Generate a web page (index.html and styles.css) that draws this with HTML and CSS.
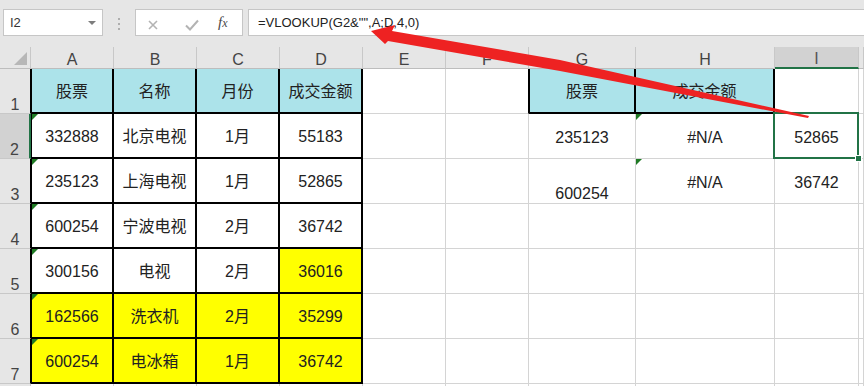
FILE: index.html
```html
<!DOCTYPE html>
<html lang="zh">
<head>
<meta charset="utf-8">
<title>VLOOKUP</title>
<link rel="stylesheet" href="styles.css">
</head>
<body>
<div class="app">
  <div class="toolbar">
    <div class="namebox"><span>I2</span><span class="caret"></span></div>
    <div class="grip"><span></span></div>
    <div class="fxbox">
      <svg class="fxicons" width="106" height="25" viewBox="0 0 106 25">
        <path d="M13 11 L21 19 M21 11 L13 19" stroke="#b3b3b3" stroke-width="1.6" fill="none"/>
        <path d="M50 15.5 L54 19.5 L62 10.5" stroke="#b3b3b3" stroke-width="2" fill="none"/>
      </svg>
      <span class="fx">f<span class="fxx">x</span></span>
    </div>
    <div class="formula">=VLOOKUP(G2&amp;"",A;D,4,0)</div>
  </div>

  <div class="sheet">
    <div class="corner"><span class="corner-tri"></span></div>
    <div class="ch">A</div><div class="ch">B</div><div class="ch">C</div><div class="ch">D</div><div class="ch">E</div><div class="ch">F</div><div class="ch">G</div><div class="ch">H</div><div class="ch chsel">I</div><div class="ch"></div>

    <div class="rh blk">1</div>
    <div class="c b bl cy">股票</div><div class="c b cy">名称</div><div class="c b cy">月份</div><div class="c b cy">成交金额</div>
    <div class="c"></div><div class="c f1"></div>
    <div class="c b bl cy">股票</div><div class="c b cy">成交金额</div>
    <div class="c"></div><div class="c"></div>

    <div class="rh rhsel">2</div>
    <div class="c b bl tri">332888</div><div class="c b">北京电视</div><div class="c b">1月</div><div class="c b">55183</div>
    <div class="c"></div><div class="c"></div>
    <div class="c">235123</div><div class="c tri">#N/A</div><div class="c sel">52865</div><div class="c"></div>

    <div class="rh blk">3</div>
    <div class="c b bl tri">235123</div><div class="c b">上海电视</div><div class="c b">1月</div><div class="c b">52865</div>
    <div class="c"></div><div class="c"></div>
    <div class="c low">600254</div><div class="c tri">#N/A</div><div class="c">36742</div><div class="c"></div>

    <div class="rh blk">4</div>
    <div class="c b bl tri">600254</div><div class="c b">宁波电视</div><div class="c b">2月</div><div class="c b">36742</div>
    <div class="c"></div><div class="c"></div><div class="c"></div><div class="c"></div><div class="c"></div><div class="c"></div>

    <div class="rh blk">5</div>
    <div class="c b bl tri">300156</div><div class="c b">电视</div><div class="c b">2月</div><div class="c b ye">36016</div>
    <div class="c"></div><div class="c"></div><div class="c"></div><div class="c"></div><div class="c"></div><div class="c"></div>

    <div class="rh blk">6</div>
    <div class="c b bl tri ye">162566</div><div class="c b ye">洗衣机</div><div class="c b ye">2月</div><div class="c b ye">35299</div>
    <div class="c"></div><div class="c"></div><div class="c"></div><div class="c"></div><div class="c"></div><div class="c"></div>

    <div class="rh blk">7</div>
    <div class="c b bl tri ye">600254</div><div class="c b ye">电冰箱</div><div class="c b ye">1月</div><div class="c b ye">36742</div>
    <div class="c"></div><div class="c"></div><div class="c"></div><div class="c"></div><div class="c"></div><div class="c"></div>

    <div class="rh"></div>
    <div class="c"></div><div class="c"></div><div class="c"></div><div class="c"></div><div class="c"></div><div class="c"></div><div class="c"></div><div class="c"></div><div class="c"></div><div class="c"></div>
  </div>

  <svg class="arrow" width="864" height="386" viewBox="0 0 864 386">
    <polygon points="371,31 395,25 392,31 560,60 809,116 808,118 560,71 388,41 385,44" fill="#ee2222"/>
  </svg>
</div>
</body>
</html>
```

FILE: styles.css
```css
html, body {
  margin: 0;
  padding: 0;
  background: #fff;
}

.app {
  width: 864px;
  height: 386px;
  overflow: hidden;
  position: relative;
  background: #fff;
  font-family: "Liberation Sans", "Noto Sans CJK SC", sans-serif;
}

/* ---------- formula bar ---------- */
.toolbar {
  height: 47px;
  box-sizing: border-box;
  background: #e6e6e6;
  display: flex;
  align-items: flex-start;
  padding: 9px 0 0 3px;
}

.namebox {
  width: 100px;
  height: 27px;
  box-sizing: border-box;
  background: #fff;
  border: 1px solid #c6c6c6;
  display: flex;
  align-items: center;
  justify-content: space-between;
  padding: 0 6px 0 6px;
  font-size: 13px;
  color: #333;
}

.caret {
  width: 0;
  height: 0;
  border-left: 4px solid transparent;
  border-right: 4px solid transparent;
  border-top: 4px solid #7d7d7d;
}

.grip {
  width: 32px;
  display: flex;
  justify-content: center;
  padding-top: 9px;
}

.grip span {
  width: 2px;
  height: 12px;
  background: repeating-linear-gradient(to bottom, #aeaeae 0 2px, transparent 2px 5px);
}

.fxbox {
  width: 108px;
  height: 27px;
  box-sizing: border-box;
  background: #fff;
  border: 1px solid #c6c6c6;
  position: relative;
  display: flex;
  align-items: center;
}

.fxicons {
  display: block;
}

.fx {
  position: absolute;
  left: 82px;
  top: 4px;
  font-family: "Liberation Serif", serif;
  font-style: italic;
  font-size: 15px;
  color: #4a4a4a;
  line-height: 16px;
}

.fxx {
  font-size: 12px;
}

.formula {
  flex: 1;
  margin-left: 5px;
  height: 27px;
  box-sizing: border-box;
  background: #fff;
  border: 1px solid #c6c6c6;
  border-right: none;
  display: flex;
  align-items: center;
  padding-left: 9px;
  font-size: 13px;
  color: #222;
}

/* ---------- sheet grid ---------- */
.sheet {
  display: grid;
  grid-template-columns: 31px 83px 83px 83px 83px 83px 83px 107px 139px 84px 1fr;
  grid-template-rows: 22px repeat(8, 45px);
}

.corner {
  background: #e6e6e6;
  border-right: 1px solid #c8c8c8;
  border-bottom: 1px solid #bdbdbd;
  box-sizing: border-box;
  display: flex;
  align-items: flex-end;
  justify-content: flex-end;
  padding: 0 3px 3px 0;
}

.corner-tri {
  width: 0;
  height: 0;
  border-left: 13px solid transparent;
  border-bottom: 13px solid #b7b7b7;
}

.ch {
  background: #e6e6e6;
  border-right: 1px solid #c8c8c8;
  border-bottom: 1px solid #bdbdbd;
  box-sizing: border-box;
  display: flex;
  justify-content: center;
  align-items: flex-end;
  font-size: 16px;
  line-height: 16px;
  color: #444;
}

.chsel {
  background: #d2d2d2;
  border-bottom: 2px solid #217346;
  color: #555;
}

.rh {
  background: #e6e6e6;
  border-right: 1px solid #c8c8c8;
  border-bottom: 1px solid #c8c8c8;
  box-sizing: border-box;
  display: flex;
  justify-content: center;
  align-items: flex-end;
  font-size: 16px;
  line-height: 16px;
  color: #444;
}

.rh.blk {
  border-right-color: #000;
}

.rhsel {
  background: #d2d2d2;
  border-right: 2px solid #217346;
}

.c {
  position: relative;
  box-sizing: border-box;
  border-right: 1px solid #d4d4d4;
  border-bottom: 1px solid #d4d4d4;
  display: flex;
  align-items: center;
  justify-content: center;
  padding-top: 3px;
  font-size: 16px;
  line-height: 20px;
  color: #222;
  white-space: nowrap;
}

.b {
  border-right: 2px solid #000;
  border-bottom: 2px solid #000;
}

.bl {
  border-left: 1px solid #000;
}

.f1 {
  border-right-color: #000;
}

.cy {
  background: #ace3ea;
}

.ye {
  background: #ffff00;
}

.low {
  align-items: flex-end;
  padding-top: 0;
  padding-bottom: 1px;
  line-height: 16px;
}

.tri::before {
  content: "";
  position: absolute;
  left: 0;
  top: 0;
  width: 0;
  height: 0;
  border-top: 6px solid #1f7a24;
  border-right: 6px solid transparent;
}

.sel::after {
  content: "";
  position: absolute;
  left: -2px;
  top: -2px;
  right: -1px;
  bottom: -1px;
  border: 2px solid #217346;
}

.sel::before {
  content: "";
  position: absolute;
  right: -4px;
  bottom: -4px;
  width: 5px;
  height: 5px;
  background: #217346;
  border: 1px solid #fff;
  z-index: 1;
}

/* ---------- annotation arrow ---------- */
.arrow {
  position: absolute;
  left: 0;
  top: 0;
  pointer-events: none;
}
```
